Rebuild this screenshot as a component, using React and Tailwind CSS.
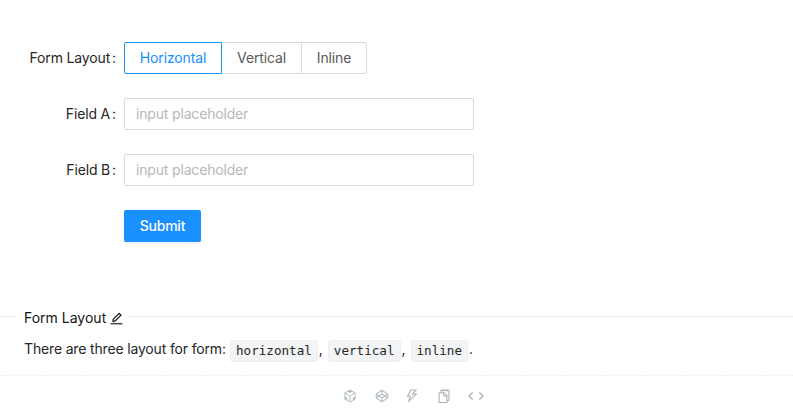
import { Fragment } from "react";
import {
  AiOutlineCodeSandbox,
  AiOutlineCodepen,
  AiOutlineEdit,
  AiOutlineSnippets,
  AiOutlineThunderbolt,
} from "react-icons/ai";

function Row({ label, children }) {
  return (
    <div className="flex h-8 items-center">
      <div className="flex w-[124px] shrink-0 justify-end whitespace-nowrap pr-2 tracking-[-0.15px]">
        {label && (
          <>
            <span>{label}</span>
            <span className="ml-0.5">:</span>
          </>
        )}
      </div>
      {children}
    </div>
  );
}

function Field({ label }) {
  return (
    <Row label={label}>
      <input
        type="text"
        placeholder="input placeholder"
        className="h-8 w-[350px] rounded-[2px] border border-[#d9d9d9] bg-white px-[11px] pb-0.5 tracking-[-0.17px] outline-none placeholder:text-[#b8b8b8]"
      />
    </Row>
  );
}

export default function App() {
  const codes = ["horizontal", "vertical", "inline"];
  return (
    <div className="flex h-[416px] w-[793px] flex-col overflow-hidden bg-white font-['Inter',sans-serif] text-[14px] leading-[22px] tracking-[-0.1px] text-[#262626]">
      <form className="flex h-[316px] shrink-0 flex-col gap-6 pt-[42px]">
        <Row label="Form Layout">
          <div className="flex h-8 tracking-[-0.15px] text-[#595959]">
            <button type="button" className="h-8 w-[98px] rounded-l-[2px] border border-[#1890ff] text-[#1890ff]">
              Horizontal
            </button>
            <button type="button" className="h-8 w-[79px] border-y border-[#d9d9d9]">
              Vertical
            </button>
            <button type="button" className="h-8 w-[66px] rounded-r-[2px] border border-[#d9d9d9]">
              Inline
            </button>
          </div>
        </Row>
        <Field label="Field A" />
        <Field label="Field B" />
        <Row>
          <button
            type="button"
            className="h-8 w-[77px] rounded-[2px] bg-[#1890ff] font-medium tracking-[-0.25px] text-white shadow-[0_2px_0_rgba(0,0,0,0.045)] [text-shadow:0_-1px_0_rgba(0,0,0,0.12)]"
          >
            Submit
          </button>
        </Row>
      </form>
      <section className="flex h-[60px] shrink-0 flex-col">
        <div className="flex h-px items-center">
          <span className="h-px w-4 bg-[#ebebeb]" />
          <h2 className="flex w-[113px] items-center gap-[3px] whitespace-nowrap pl-2 pt-[3px] font-normal tracking-[0px] text-[#141414]">
            <span>Form Layout</span>
            <AiOutlineEdit size={15} strokeWidth={10} className="shrink-0" />
          </h2>
          <span className="h-px flex-1 bg-[#ebebeb]" />
        </div>
        <p className="mt-[21px] flex h-[22px] items-center whitespace-pre pl-6">
          <span className="w-[206px] tracking-[-0.16px]">There are three layout for form:</span>
          {codes.map((code, i) => (
            <Fragment key={code}>
              <code className="mt-[3px] flex h-[22px] items-center rounded-[3px] border border-[#eeeff1] bg-[#f2f4f5] px-[5px] font-['DejaVu_Sans_Mono',monospace] text-[12.6px] tracking-normal">
                {code}
              </code>
              <span className="w-2.5 pl-px">{i < 2 ? "," : "."}</span>
            </Fragment>
          ))}
        </p>
        <div className="mt-auto h-px bg-[repeating-linear-gradient(90deg,#f0f0f0_0_3px,transparent_3px_5px)]" />
      </section>
      <footer className="flex h-10 items-center gap-4 pl-[342px] text-[#b2b2b2]">
        <AiOutlineCodeSandbox size={16} className="text-[#b3bdc4]" />
        <AiOutlineCodepen size={16} className="text-[#b3bdc4]" />
        <div className="-ml-0.5 flex items-center gap-4">
          <AiOutlineThunderbolt size={16} strokeWidth={4} />
          <AiOutlineSnippets size={16} strokeWidth={0} />
          <svg width="16" height="16" viewBox="0 0 16 16" fill="none" stroke="currentColor" strokeWidth="1.4">
            <path d="M4.7 4.5 1 8l3.7 3.5M11.3 4.5 15 8l-3.7 3.5" />
          </svg>
        </div>
      </footer>
    </div>
  );
}
